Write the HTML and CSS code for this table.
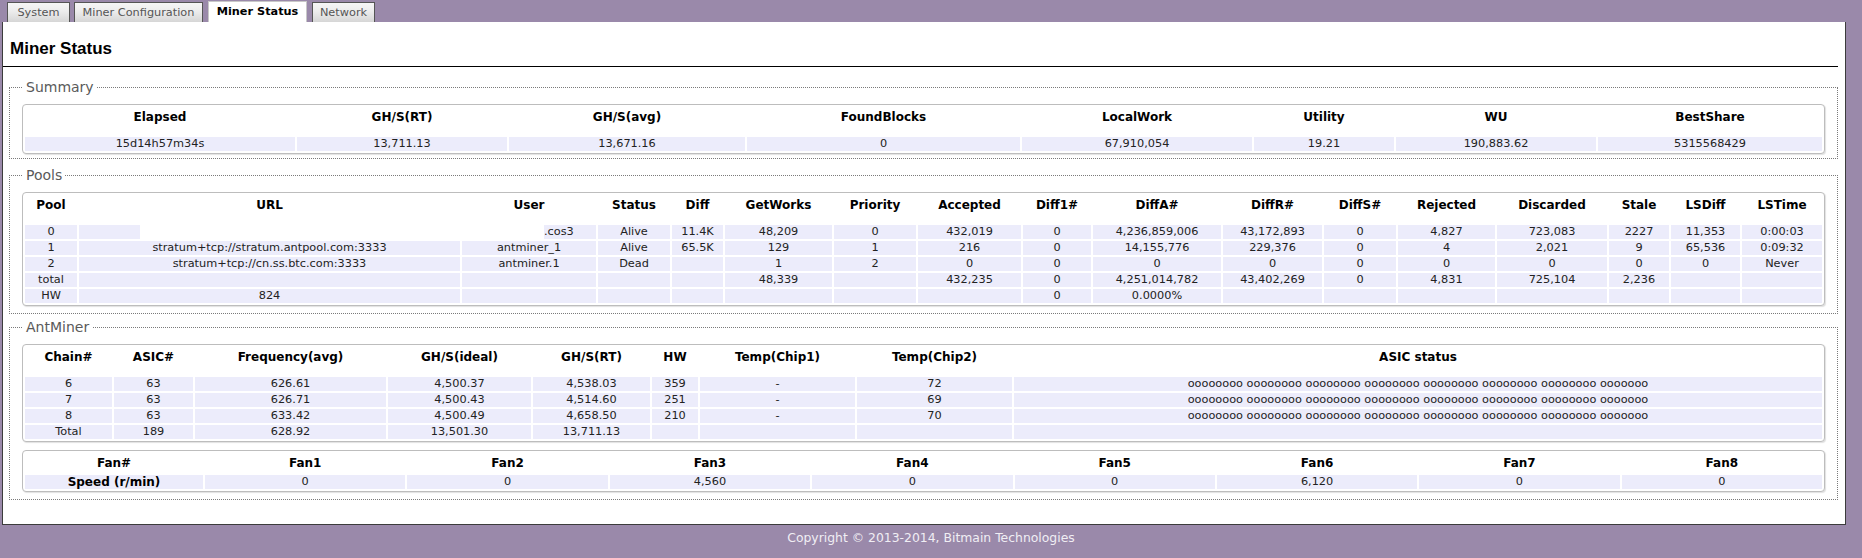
FILE: index.html
```html
<!DOCTYPE html>
<html>
<head>
<meta charset="utf-8">
<title>Miner Status</title>
<link rel="stylesheet" href="styles.css">
</head>
<body>
<div class="tabs">
  <a class="tab tab-system">System</a>
  <a class="tab tab-config">Miner Configuration</a>
  <a class="tab tab-status active">Miner Status</a>
  <a class="tab tab-network">Network</a>
</div>
<div class="panel">
  <h2 class="title">Miner Status</h2>

  <fieldset class="section sec-summary">
    <legend>Summary</legend>
    <table class="grid summary">
      <colgroup><col><col><col><col><col><col><col><col></colgroup>
      <thead>
        <tr><th>Elapsed</th><th>GH/S(RT)</th><th>GH/S(avg)</th><th>FoundBlocks</th><th>LocalWork</th><th>Utility</th><th>WU</th><th>BestShare</th></tr>
      </thead>
      <tbody>
        <tr><td>15d14h57m34s</td><td>13,711.13</td><td>13,671.16</td><td>0</td><td>67,910,054</td><td>19.21</td><td>190,883.62</td><td>5315568429</td></tr>
      </tbody>
    </table>
  </fieldset>

  <fieldset class="section sec-pools">
    <legend>Pools</legend>
    <table class="grid pools">
      <colgroup><col><col><col><col><col><col><col><col><col><col><col><col><col><col><col><col><col></colgroup>
      <thead>
        <tr><th>Pool</th><th>URL</th><th>User</th><th>Status</th><th>Diff</th><th>GetWorks</th><th>Priority</th><th>Accepted</th><th>Diff1#</th><th>DiffA#</th><th>DiffR#</th><th>DiffS#</th><th>Rejected</th><th>Discarded</th><th>Stale</th><th>LSDiff</th><th>LSTime</th></tr>
      </thead>
      <tbody>
        <tr><td>0</td><td class="url-hidden"><span class="redact url-redact"></span></td><td class="user-hidden"><span class="redact user-redact"></span>.cos3</td><td>Alive</td><td>11.4K</td><td>48,209</td><td>0</td><td>432,019</td><td>0</td><td>4,236,859,006</td><td>43,172,893</td><td>0</td><td>4,827</td><td>723,083</td><td>2227</td><td>11,353</td><td>0:00:03</td></tr>
        <tr><td>1</td><td>stratum+tcp://stratum.antpool.com:3333</td><td>antminer_1</td><td>Alive</td><td>65.5K</td><td>129</td><td>1</td><td>216</td><td>0</td><td>14,155,776</td><td>229,376</td><td>0</td><td>4</td><td>2,021</td><td>9</td><td>65,536</td><td>0:09:32</td></tr>
        <tr><td>2</td><td>stratum+tcp://cn.ss.btc.com:3333</td><td>antminer.1</td><td>Dead</td><td></td><td>1</td><td>2</td><td>0</td><td>0</td><td>0</td><td>0</td><td>0</td><td>0</td><td>0</td><td>0</td><td>0</td><td>Never</td></tr>
        <tr><td>total</td><td></td><td></td><td></td><td></td><td>48,339</td><td></td><td>432,235</td><td>0</td><td>4,251,014,782</td><td>43,402,269</td><td>0</td><td>4,831</td><td>725,104</td><td>2,236</td><td></td><td></td></tr>
        <tr><td>HW</td><td>824</td><td></td><td></td><td></td><td></td><td></td><td></td><td>0</td><td>0.0000%</td><td></td><td></td><td></td><td></td><td></td><td></td><td></td></tr>
      </tbody>
    </table>
  </fieldset>

  <fieldset class="section sec-ant">
    <legend>AntMiner</legend>
    <table class="grid chains">
      <colgroup><col><col><col><col><col><col><col><col><col></colgroup>
      <thead>
        <tr><th>Chain#</th><th>ASIC#</th><th>Frequency(avg)</th><th>GH/S(ideal)</th><th>GH/S(RT)</th><th>HW</th><th>Temp(Chip1)</th><th>Temp(Chip2)</th><th>ASIC status</th></tr>
      </thead>
      <tbody>
        <tr><td>6</td><td>63</td><td>626.61</td><td>4,500.37</td><td>4,538.03</td><td>359</td><td>-</td><td>72</td><td>oooooooo oooooooo oooooooo oooooooo oooooooo oooooooo oooooooo ooooooo</td></tr>
        <tr><td>7</td><td>63</td><td>626.71</td><td>4,500.43</td><td>4,514.60</td><td>251</td><td>-</td><td>69</td><td>oooooooo oooooooo oooooooo oooooooo oooooooo oooooooo oooooooo ooooooo</td></tr>
        <tr><td>8</td><td>63</td><td>633.42</td><td>4,500.49</td><td>4,658.50</td><td>210</td><td>-</td><td>70</td><td>oooooooo oooooooo oooooooo oooooooo oooooooo oooooooo oooooooo ooooooo</td></tr>
        <tr><td>Total</td><td>189</td><td>628.92</td><td>13,501.30</td><td>13,711.13</td><td></td><td></td><td></td><td></td></tr>
      </tbody>
    </table>
    <table class="grid fans">
      <colgroup><col><col><col><col><col><col><col><col><col></colgroup>
      <thead>
        <tr><th>Fan#</th><th>Fan1</th><th>Fan2</th><th>Fan3</th><th>Fan4</th><th>Fan5</th><th>Fan6</th><th>Fan7</th><th>Fan8</th></tr>
      </thead>
      <tbody>
        <tr><td class="rowhead">Speed (r/min)</td><td>0</td><td>0</td><td>4,560</td><td>0</td><td>0</td><td>6,120</td><td>0</td><td>0</td></tr>
      </tbody>
    </table>
  </fieldset>
</div>
<div class="footer">Copyright © 2013-2014, Bitmain Technologies</div>
</body>
</html>
```

FILE: styles.css
```css
html, body {
  margin: 0;
  padding: 0;
}
body {
  background: #9a89aa;
  font-family: "DejaVu Sans", Verdana, sans-serif;
  font-size: 11.3px;
  color: #222;
}

/* tabs */
.tabs {
  display: flex;
  align-items: flex-end;
  height: 22px;
  padding-left: 7px;
}
.tab {
  display: block;
  box-sizing: border-box;
  height: 20px;
  line-height: 19px;
  padding: 0;
  text-align: center;
  white-space: nowrap;
  border: 1px solid #555;
  border-bottom: none;
  background: linear-gradient(#f6f6f6 0%, #ececec 45%, #d6d6d6 100%);
  color: #555;
  margin-left: 5px;
}
.tab-system { width: 63px; margin-left: 0; }
.tab-config { width: 129px; margin-left: 4px; }
.tab-status { width: 99px; }
.tab-network { width: 63px; }
.tab.active {
  height: 21px;
  line-height: 20px;
  background: #fff;
  border-color: #c8c8c8;
  color: #000;
  font-weight: bold;
}

/* panel */
.panel {
  margin: 0 16px 0 2px;
  background: #fff;
  border-left: 1px solid #3c3c3c;
  border-right: 1px solid #3c3c3c;
  border-bottom: 1px solid #3c3c3c;
  padding: 0 7px 24px 0;
}
.title {
  margin: 0;
  padding: 17px 0 7px 7px;
  font-family: "Liberation Sans", Arial, sans-serif;
  font-size: 17px;
  line-height: 20px;
  font-weight: bold;
  color: #000;
  border-bottom: 1px solid #000;
}

/* sections */
.section {
  margin: 8px 0 0 6px;
  padding: 9px 12px 7px 12px;
  border: 1px dotted #7a7a7a;
  min-width: 0;
}
.sec-summary {
  margin-top: 12px;
  padding-bottom: 4px;
}
.sec-ant {
  margin-top: 5px;
}
.section legend {
  padding: 0 3px 0 4px;
  font-size: 14px;
  line-height: 16px;
  color: #5a5a5a;
}

/* tables */
.grid {
  width: 100%;
  table-layout: fixed;
  border-collapse: separate;
  border-spacing: 2px;
  border: 1px solid #bdbdbd;
  border-radius: 4px;
  box-shadow: 1px 1px 1px rgba(0, 0, 0, 0.12);
  background: #fff;
}
.grid th {
  padding: 3px 0 11px;
  font-size: 12px;
  line-height: 14px;
  font-weight: bold;
  color: #000;
  text-align: center;
  white-space: nowrap;
  overflow: hidden;
}
.grid td {
  padding: 0;
  height: 14px;
  line-height: 14px;
  background: #ececfb;
  text-align: center;
  white-space: nowrap;
  overflow: hidden;
  color: #222;
}
.fans {
  margin-top: 8px;
}
.fans th {
  padding: 3px 0 3px;
}
.fans td.rowhead {
  font-weight: bold;
  font-size: 12px;
  color: #000;
}

/* redacted pool 0 */
.grid td.url-hidden {
  text-align: right;
}
.grid td.user-hidden {
  text-align: left;
}
.redact {
  display: inline-block;
  height: 14px;
  vertical-align: top;
  background: #fff;
}
.url-redact {
  width: 320px;
}
.user-redact {
  width: 82px;
}

/* column widths */
.summary col:nth-child(1) { width: 270px; }
.summary col:nth-child(2) { width: 210px; }
.summary col:nth-child(3) { width: 236px; }
.summary col:nth-child(4) { width: 273px; }
.summary col:nth-child(5) { width: 230px; }
.summary col:nth-child(6) { width: 140px; }
.summary col:nth-child(7) { width: 200px; }

.pools col:nth-child(1) { width: 52px; }
.pools col:nth-child(2) { width: 381px; }
.pools col:nth-child(3) { width: 134px; }
.pools col:nth-child(4) { width: 72px; }
.pools col:nth-child(5) { width: 51px; }
.pools col:nth-child(6) { width: 107px; }
.pools col:nth-child(7) { width: 82px; }
.pools col:nth-child(8) { width: 103px; }
.pools col:nth-child(9) { width: 68px; }
.pools col:nth-child(10) { width: 128px; }
.pools col:nth-child(11) { width: 99px; }
.pools col:nth-child(12) { width: 72px; }
.pools col:nth-child(13) { width: 97px; }
.pools col:nth-child(14) { width: 110px; }
.pools col:nth-child(15) { width: 60px; }
.pools col:nth-child(16) { width: 69px; }

.chains col:nth-child(1) { width: 87px; }
.chains col:nth-child(2) { width: 79px; }
.chains col:nth-child(3) { width: 191px; }
.chains col:nth-child(4) { width: 143px; }
.chains col:nth-child(5) { width: 117px; }
.chains col:nth-child(6) { width: 46px; }
.chains col:nth-child(7) { width: 155px; }
.chains col:nth-child(8) { width: 155px; }

.fans col:nth-child(1) { width: 178px; }

/* footer */
.footer {
  margin-top: 6px;
  text-align: center;
  font-size: 12.4px;
  line-height: 14px;
  color: #f0eef4;
}
```
